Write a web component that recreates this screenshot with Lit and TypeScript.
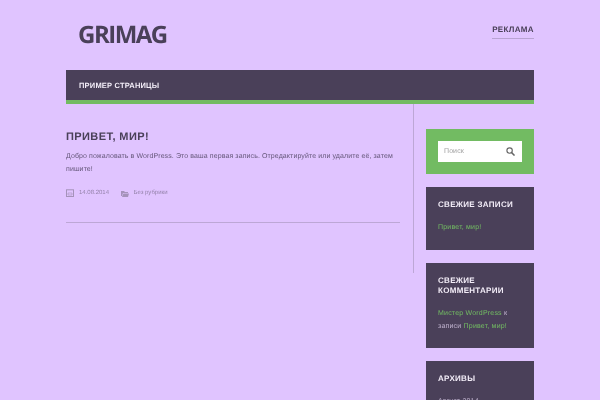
import { LitElement, html, css } from "lit";
import { customElement } from "lit/decorators.js";

@customElement("app-root")
export class AppRoot extends LitElement {
  static styles = css`
    :host {
      display: block;
      height: 400px;
      overflow: hidden;
      background: #e0c4ff;
      font-family: "Liberation Sans", Arial, sans-serif;
      color: #4a4059;
      text-rendering: geometricPrecision;
    }
    .wrap { width: 468px; margin: 0 auto; will-change: transform; }
    .top { height: 70px; display: flex; justify-content: space-between; align-items: flex-start; }
    .logo {
      font-family: "Open Sans", sans-serif;
      font-weight: 700;
      font-size: 24px;
      line-height: 30px;
      letter-spacing: -1.5px;
      margin: 20px 0 0 12px;
    }
    .ad {
      margin-top: 24px;
      font-size: 8px;
      font-weight: 700;
      letter-spacing: 0.35px;
      line-height: 11px;
      padding-bottom: 3px;
      border-bottom: 1px solid #b9a3d3;
    }
    .nav {
      height: 30px;
      background: #4a4059;
      border-bottom: 4px solid #72bb62;
      color: #f3edf8;
      font-size: 7.5px;
      font-weight: 700;
      letter-spacing: 0.2px;
      line-height: 31px;
      padding-left: 13px;
    }
    .main { display: flex; gap: 12px; align-items: flex-start; }
    .content {
      width: 334px;
      height: 169px;
      padding-right: 13px;
      border-right: 1px solid #bda7d6;
      flex: none;
    }
    .post { height: 118px; border-bottom: 1px solid #bda7d6; }
    h1 {
      margin: 0;
      padding-top: 25.5px;
      font-size: 11px;
      line-height: 14px;
      font-weight: 700;
      letter-spacing: 0.4px;
    }
    p {
      margin: 6px 0 0;
      font-size: 7px;
      line-height: 13px;
      letter-spacing: 0.1px;
      color: #65577a;
    }
    .meta {
      display: flex;
      align-items: center;
      margin-top: 13px;
      font-size: 6px;
      letter-spacing: 0;
      color: #9583ab;
      line-height: 9px;
    }
    .meta svg { display: block; flex: none; }
    .date { margin: 0 11.5px 0 5px; }
    .cat { margin-left: 5px; }
    .side { width: 108px; flex: none; padding-top: 25px; display: flex; flex-direction: column; gap: 13px; }
    .search { height: 45px; background: #72bb62; padding: 12px; box-sizing: border-box; }
    .box {
      height: 21px; background: #fff; display: flex; align-items: center; justify-content: space-between;
      padding: 0 7px 0 6px; font-size: 7px; letter-spacing: 0.1px; color: #a0a0a0;
    }
    .widget { background: #4a4059; padding: 12.5px 12px 0; box-sizing: border-box; }
    h2 {
      margin: 0;
      font-size: 8px;
      line-height: 10.5px;
      font-weight: 700;
      letter-spacing: 0.3px;
      color: #f3edf8;
    }
    .widget div {
      margin-top: 10.5px;
      font-size: 7px;
      line-height: 13px;
      letter-spacing: 0.2px;
      color: #c0b3cf;
    }
    .widget a { color: #72bb62; text-decoration: none; }
    .w1 { height: 63px; }
    .w2 { height: 85px; }
    .w3 { height: 60px; }
  `;

  render() {
    return html`<div class="wrap">
      <header class="top">
        <div class="logo">GRIMAG</div>
        <div class="ad">РЕКЛАМА</div>
      </header>
      <nav class="nav">ПРИМЕР СТРАНИЦЫ</nav>
      <div class="main">
        <section class="content">
          <article class="post">
            <h1>ПРИВЕТ, МИР!</h1>
            <p>Добро пожаловать в WordPress. Это ваша первая запись. Отредактируйте или удалите её, затем пишите!</p>
            <div class="meta">
              <svg width="8" height="8" viewBox="0 0 8 8" fill="none" stroke="#a592ba"><rect x=".5" y=".8" width="7" height="6.7"/><path d="M2 4h4v2H2z" stroke-width=".6"/></svg>
              <span class="date">14.08.2014</span>
              <svg width="8" height="7" viewBox="0 0 8 7" fill="#a592ba"><path d="M0 1h3l1 1h3v1H2L1 6 0 6zM2.4 3.5H8L7 7H1z"/></svg>
              <span class="cat">Без рубрики</span>
            </div>
          </article>
        </section>
        <aside class="side">
          <div class="search">
            <div class="box">
              <span>Поиск</span>
              <svg width="9" height="9" viewBox="0 0 8 8" fill="none" stroke="#666" stroke-width="1"><circle cx="3.2" cy="3.2" r="2.4"/><path d="M5 5l2.6 2.6" stroke-width="1.3"/></svg>
            </div>
          </div>
          <div class="widget w1">
            <h2>СВЕЖИЕ ЗАПИСИ</h2>
            <div><a>Привет, мир!</a></div>
          </div>
          <div class="widget w2">
            <h2>СВЕЖИЕ КОММЕНТАРИИ</h2>
            <div><a>Мистер WordPress</a> к записи <a>Привет, мир!</a></div>
          </div>
          <div class="widget w3">
            <h2>АРХИВЫ</h2>
            <div>Август 2014</div>
          </div>
        </aside>
      </div>
    </div>`;
  }
}
